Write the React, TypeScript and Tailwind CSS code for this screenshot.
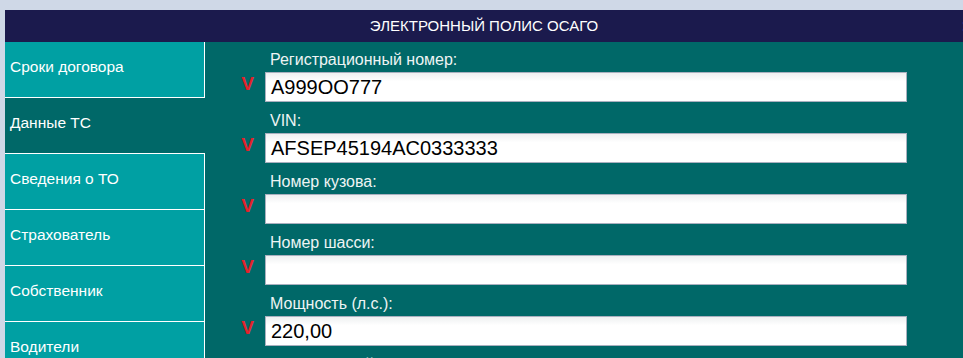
import React from 'react';

const menu = [
  'Сроки договора',
  'Данные ТС',
  'Сведения о ТО',
  'Страхователь',
  'Собственник',
  'Водители',
  'Расчёт',
];

const fields = [
  { label: 'Регистрационный номер:', value: 'A999OO777' },
  { label: 'VIN:', value: 'AFSEP45194AC0333333' },
  { label: 'Номер кузова:', value: '' },
  { label: 'Номер шасси:', value: '' },
  { label: 'Мощность (л.с.):', value: '220,00' },
  { label: 'Разрешённый вес (кг):', value: '' },
];

export default function App() {
  const active = 1;

  return (
    <div
      className="h-[358px] w-[963px] overflow-hidden bg-[#cfd8e7] pt-[10px] pl-[5px]"
      style={{ fontFamily: '"Liberation Sans", Arial, sans-serif' }}
    >
      <div className="relative flex h-[32px] items-center justify-center bg-[#1b1a4d] text-[15px] text-white">
        <span>ЭЛЕКТРОННЫЙ ПОЛИС ОСАГО</span>
        <span className="absolute right-[-4px] top-[4px] text-[16px] font-bold text-[#cfe4ff]">:</span>
      </div>

      <div className="flex h-[400px] bg-[#006868]">
        <div className="w-[200px] shrink-0">
          {menu.map((item, i) => (
            <div
              key={item}
              className={
                i === active
                  ? 'flex h-[56px] items-center border-b border-white pb-[5px] pl-[5px] text-[15.5px] text-white'
                  : 'flex h-[56px] items-center border-r border-b border-white bg-[#00a0a3] pb-[5px] pl-[5px] text-[15.5px] text-white'
              }
            >
              {item}
            </div>
          ))}
        </div>

        <div className="flex-1 pt-[8px]">
          {fields.map((f) => (
            <div key={f.label} className="mb-[9px]">
              <div className="h-[22px] pl-[65px] text-[16px] leading-[20px] text-[#eef4f4]">
                {f.label}
              </div>
              <div className="flex items-center">
                <div className="w-[60px] pr-[11px] pb-[8px] text-right text-[19px] font-bold leading-none text-[#e3222b]">
                  V
                </div>
                <div className="flex h-[30px] w-[642px] items-center border border-[#a9b0bf] bg-gradient-to-b from-[#eef0f1] to-white to-[30%] pl-[5px] text-[20px] text-black">
                  {f.value}
                </div>
              </div>
            </div>
          ))}
        </div>
      </div>
    </div>
  );
}
